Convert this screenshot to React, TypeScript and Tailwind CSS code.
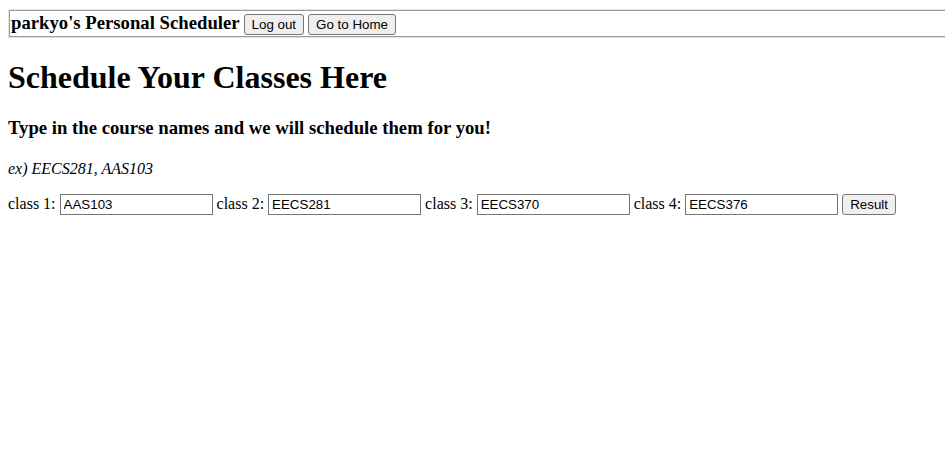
import React from 'react';

const serif = "font-['Liberation_Serif','Times_New_Roman',serif]";
const sans = "font-['Liberation_Sans',Arial,sans-serif]";

const Btn: React.FC<{ label: string }> = ({ label }) => (
  <button
    className={`${sans} text-[13.33px] leading-[15px] h-[21px] px-[7px] border border-[#767676] rounded-[3px] bg-[#efefef] text-black`}
  >
    {label}
  </button>
);

const ClassInput: React.FC<{ label: string; value: string }> = ({ label, value }) => (
  <>
    <span>{label}</span>
    <input
      readOnly
      value={value}
      className={`${sans} text-[13.33px] w-[153px] h-[21px] px-[3px] border border-[#767676] bg-white text-black outline-none`}
    />
  </>
);

export default function App() {
  const classes = [
    { label: 'class 1:', value: 'AAS103' },
    { label: 'class 2:', value: 'EECS281' },
    { label: 'class 3:', value: 'EECS370' },
    { label: 'class 4:', value: 'EECS376' },
  ];

  return (
    <div className={`${serif} text-black bg-white min-h-[469px] w-[945px] overflow-hidden pt-[9px] pl-2 text-[16px]`}>
      {/* top bar */}
      <div className="flex items-baseline gap-[4px] h-[29px] border border-[#e3e3e3] shadow-[inset_0_0_0_1px_#9b9b9b] pl-[2px] pt-[2px] -mr-4">
        <h3 className="text-[18.72px] font-bold leading-[21px]">parkyo's Personal Scheduler</h3>
        <Btn label="Log out" />
        <Btn label="Go to Home" />
      </div>

      <h1 className="text-[32px] font-bold leading-[37px] mt-[21px] mb-[21px]">Schedule Your Classes Here</h1>
      <h3 className="text-[18.72px] font-bold leading-[21.5px] mb-[21.5px]">Type in the course names and we will schedule them for you!</h3>
      <p className="italic leading-[18.4px] mb-[14px]">ex) EECS281, AAS103</p>

      <div className="flex items-baseline gap-[4px]">
        {classes.map((c) => (
          <ClassInput key={c.label} label={c.label} value={c.value} />
        ))}
        <Btn label="Result" />
      </div>
    </div>
  );
}
